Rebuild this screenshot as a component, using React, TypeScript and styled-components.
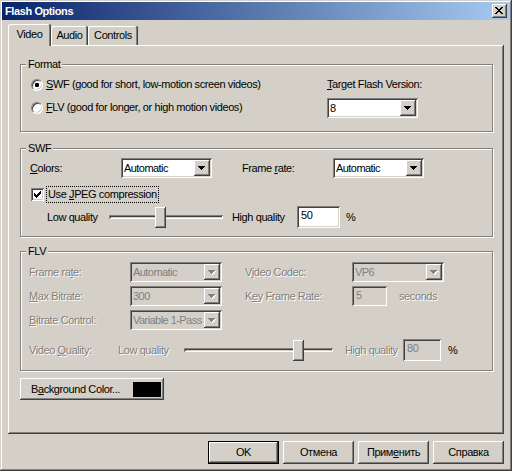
import React from "react";
import styled, { createGlobalStyle, css } from "styled-components";

const face = "#d4d0c8";
const shadow = "#808080";
const dark = "#404040";
const hi = "#ffffff";

const raised = css`
  box-shadow: inset -1px -1px ${dark}, inset 1px 1px ${hi}, inset -2px -2px ${shadow},
    inset 2px 2px ${face};
`;
const sunken = css`
  box-shadow: inset 1px 1px ${shadow}, inset -1px -1px ${hi}, inset 2px 2px ${dark},
    inset -2px -2px ${face};
`;

const GlobalStyle = createGlobalStyle`
  html, body { margin: 0; padding: 0; background: ${face}; }
  body { font-family: "Liberation Sans", Arial, sans-serif; font-size: 11px; }
  * { box-sizing: border-box; }
`;

const Window = styled.div`
  width: 512px;
  height: 471px;
  background: ${face};
  box-shadow: inset -1px -1px ${dark}, inset 1px 1px ${face}, inset -2px -2px ${shadow},
    inset 2px 2px ${hi};
  padding: 2px;
  display: flex;
  flex-direction: column;
  letter-spacing: -0.4px;
  color: #000;
  line-height: 13px;
`;

const TitleBar = styled.div`
  height: 18px;
  display: flex;
  align-items: center;
  justify-content: space-between;
  background: linear-gradient(to right, #0a246a, #a6caf0);
  padding: 0 3px 0 3px;
`;

const Title = styled.span`
  color: #fff;
  font-weight: bold;
  letter-spacing: -0.4px;
`;

const CloseButton = styled.div`
  width: 15px;
  height: 14px;
  background: ${face};
  ${raised};
  display: flex;
  align-items: center;
  justify-content: center;
  padding: 0 1px 1px 0;
`;

const Content = styled.div`
  flex: 1;
  padding: 4px 6px 0 6px;
  display: flex;
  flex-direction: column;
`;

const TabStrip = styled.div`
  display: flex;
  align-items: flex-end;
  height: 21px;
`;

const Tab = styled.div<{ $active?: boolean; $w: number }>`
  position: relative;
  z-index: ${(p) => (p.$active ? 1 : 0)};
  width: ${(p) => p.$w}px;
  height: ${(p) => (p.$active ? 22 : 19)}px;
  margin-bottom: ${(p) => (p.$active ? -1 : 0)}px;
  padding-bottom: ${(p) => (p.$active ? 2 : 0)}px;
  background: ${face};
  display: flex;
  align-items: center;
  justify-content: center;
  box-shadow: inset -1px 0 ${dark}, inset 1px 1px ${hi}, inset -2px 0 ${shadow};
  border-radius: 2px 2px 0 0;
`;

const Panel = styled.div`
  width: 496px;
  height: 389px;
  background: ${face};
  ${raised};
  padding: 19px 0 0 12px;
  display: flex;
  flex-direction: column;
`;

const Group = styled.div<{ $h: number; $mt?: number }>`
  position: relative;
  width: 473px;
  height: ${(p) => p.$h}px;
  margin-top: ${(p) => p.$mt ?? 0}px;
  border: 1px solid ${shadow};
  box-shadow: inset 1px 1px ${hi}, 1px 1px 0 ${hi};
  flex-shrink: 0;
`;

const GroupLabel = styled.span`
  position: absolute;
  top: -7px;
  left: 5px;
  padding: 0 2px;
  background: ${face};
`;

const Key = styled.span`
  text-decoration: underline;
`;

const FormatGrid = styled.div`
  display: grid;
  grid-template-columns: 296px auto;
  padding: 8px 10px 0 10px;
`;

const Column = styled.div`
  display: flex;
  flex-direction: column;
`;

const RadioRow = styled.div`
  display: flex;
  align-items: center;
  height: 23px;
`;

const Radio = styled.span<{ $checked?: boolean }>`
  width: 12px;
  height: 12px;
  border-radius: 50%;
  background: #fff;
  border: 1px solid;
  border-color: ${shadow} ${hi} ${hi} ${shadow};
  box-shadow: inset 1px 1px ${dark}, inset -1px -1px ${face};
  display: flex;
  align-items: center;
  justify-content: center;
  flex-shrink: 0;
  &::after {
    content: "";
    width: 4px;
    height: 4px;
    border-radius: 1px;
    background: ${(p) => (p.$checked ? "#000" : "transparent")};
  }
`;

const RadioText = styled.span`
  margin-left: 3px;
  white-space: nowrap;
`;

const Row = styled.div<{ $h: number; $mt?: number; $pl?: number }>`
  display: flex;
  align-items: center;
  height: ${(p) => p.$h}px;
  margin-top: ${(p) => p.$mt ?? 0}px;
  padding-left: ${(p) => p.$pl ?? 0}px;
`;

const Label = styled.span<{ $w?: number; $ml?: number; $disabled?: boolean }>`
  flex-shrink: 0;
  white-space: nowrap;
  width: ${(p) => (p.$w ? `${p.$w}px` : "auto")};
  margin-left: ${(p) => p.$ml ?? 0}px;
  color: ${(p) => (p.$disabled ? shadow : "#000")};
  text-shadow: ${(p) => (p.$disabled ? `1px 1px 0 ${hi}` : "none")};
`;

const GroupBody = styled.div<{ $pt: number; $pl: number }>`
  padding: ${(p) => p.$pt}px 0 0 ${(p) => p.$pl}px;
`;

const Combo = styled.div<{ $w: number; $disabled?: boolean }>`
  width: ${(p) => p.$w}px;
  height: 20px;
  flex-shrink: 0;
  ${sunken};
  background: ${(p) => (p.$disabled ? face : "#fff")};
  padding: 2px;
  display: flex;
  color: ${(p) => (p.$disabled ? shadow : "#000")};
`;

const ComboValue = styled.span`
  flex: 1;
  display: flex;
  align-items: center;
  padding-left: 1px;
  white-space: nowrap;
  overflow: hidden;
  letter-spacing: -0.55px;
`;

const ComboButton = styled.span`
  width: 16px;
  flex-shrink: 0;
  background: ${face};
  ${raised};
  display: flex;
  align-items: center;
  justify-content: center;
`;

const TextBox = styled.div<{ $w: number; $h: number; $disabled?: boolean }>`
  width: ${(p) => p.$w}px;
  height: ${(p) => p.$h}px;
  flex-shrink: 0;
  ${sunken};
  background: ${(p) => (p.$disabled ? face : "#fff")};
  color: ${(p) => (p.$disabled ? shadow : "#000")};
  padding: 3px 0 0 4px;
`;

const CheckBox = styled.span`
  width: 13px;
  height: 13px;
  margin-left: 1px;
  flex-shrink: 0;
  background: #fff;
  ${sunken};
  display: flex;
  align-items: center;
  justify-content: center;
`;

const FocusLabel = styled.span`
  margin-left: 2px;
  height: 17px;
  padding: 1px 1px 0 1px;
  border: 1px dotted #000;
  display: inline-block;
  white-space: nowrap;
`;

const Slider = styled.div<{ $w: number }>`
  position: relative;
  width: ${(p) => p.$w}px;
  height: 22px;
  flex-shrink: 0;
  display: flex;
  align-items: center;
`;

const Channel = styled.div`
  width: 100%;
  height: 4px;
  ${sunken};
`;

const Thumb = styled.div`
  position: absolute;
  top: 1px;
  width: 11px;
  height: 21px;
  background: ${face};
  ${raised};
`;

const ColorButton = styled.div`
  width: 144px;
  height: 22px;
  margin-top: 7px;
  ${raised};
  background: ${face};
  display: flex;
  align-items: center;
  justify-content: space-between;
  padding: 0 3px 0 11px;
  flex-shrink: 0;
`;

const Swatch = styled.span`
  width: 28px;
  height: 15px;
  background: #000;
`;

const ButtonBar = styled.div`
  display: flex;
  justify-content: flex-end;
  gap: 4px;
  margin-top: 7px;
`;

const DialogButton = styled.div<{ $default?: boolean }>`
  width: 71px;
  height: 23px;
  background: ${face};
  display: flex;
  align-items: center;
  justify-content: center;
  ${(p) =>
    p.$default
      ? css`
          box-shadow: inset 0 0 0 1px #000, inset -2px -2px ${dark}, inset 2px 2px ${hi},
            inset -3px -3px ${shadow}, inset 3px 3px ${face};
        `
      : raised};
`;

const Arrow = ({ disabled }: { disabled?: boolean }) => (
  <svg width="8" height="5" viewBox="0 0 8 5">
    {disabled && (
      <path d="M1 1h7v1H1z M2 2h5v1H2z M3 3h3v1H3z M4 4h1v1H4z" fill={hi} />
    )}
    <path
      d="M0 0h7v1H0z M1 1h5v1H1z M2 2h3v1H2z M3 3h1v1H3z"
      fill={disabled ? shadow : "#000"}
    />
  </svg>
);

const ComboBox = ({ w, value, disabled }: { w: number; value: string; disabled?: boolean }) => (
  <Combo $w={w} $disabled={disabled}>
    <ComboValue>{value}</ComboValue>
    <ComboButton>
      <Arrow disabled={disabled} />
    </ComboButton>
  </Combo>
);

const TrackBar = ({ w, pos }: { w: number; pos: number }) => (
  <Slider $w={w}>
    <Channel />
    <Thumb style={{ left: pos }} />
  </Slider>
);

export default function App() {
  return (
    <>
      <GlobalStyle />
      <Window>
        <TitleBar>
          <Title>Flash Options</Title>
          <CloseButton>
            <svg width="8" height="7" viewBox="0 0 8 7">
              <path
                d="M0 0h2v1H0z M6 0h2v1H6z M1 1h2v1H1z M5 1h2v1H5z M2 2h4v1H2z M3 3h2v1H3z M2 4h4v1H2z M1 5h2v1H1z M5 5h2v1H5z M0 6h2v1H0z M6 6h2v1H6z"
                fill="#000"
              />
            </svg>
          </CloseButton>
        </TitleBar>
        <Content>
          <TabStrip>
            <Tab $active $w={43}>
              Video
            </Tab>
            <Tab $w={37}>Audio</Tab>
            <Tab $w={50}>Controls</Tab>
          </TabStrip>
          <Panel>
            <Group $h={68}>
              <GroupLabel>Format</GroupLabel>
              <FormatGrid>
                <Column>
                  <RadioRow>
                    <Radio $checked />
                    <RadioText>
                      <Key>S</Key>WF (good for short, low-motion screen videos)
                    </RadioText>
                  </RadioRow>
                  <RadioRow>
                    <Radio />
                    <RadioText>
                      <Key>F</Key>LV (good for longer, or high motion videos)
                    </RadioText>
                  </RadioRow>
                </Column>
                <Column>
                  <Row $h={23}>
                    <Label>
                      <Key>T</Key>arget Flash Version:
                    </Label>
                  </Row>
                  <Row $h={20} $mt={2}>
                    <ComboBox w={91} value="8" />
                  </Row>
                </Column>
              </FormatGrid>
            </Group>

            <Group $h={89} $mt={16}>
              <GroupLabel>SWF</GroupLabel>
              <GroupBody $pt={9} $pl={9}>
                <Row $h={20}>
                  <Label $w={91}>
                    <Key>C</Key>olors:
                  </Label>
                  <ComboBox w={91} value="Automatic" />
                  <Label $w={91} $ml={30}>
                    Frame <Key>r</Key>ate:
                  </Label>
                  <ComboBox w={91} value="Automatic" />
                </Row>
                <Row $h={17} $mt={8}>
                  <CheckBox>
                    <svg width="7" height="7" viewBox="0 0 7 7">
                      <path
                        d="M6 0h1v1H6z M5 1h2v1H5z M0 2h1v1H0z M4 2h3v1H4z M0 3h2v1H0z M3 3h3v1H3z M0 4h5v1H0z M1 5h3v1H1z M2 6h1v1H2z"
                        fill="#000"
                      />
                    </svg>
                  </CheckBox>
                  <FocusLabel>
                    Use <Key>J</Key>PEG compression
                  </FocusLabel>
                </Row>
                <Row $h={22} $mt={3} $pl={17}>
                  <Label $w={62}>Low quality</Label>
                  <TrackBar w={114} pos={46} />
                  <Label $w={65} $ml={9}>
                    High quality
                  </Label>
                  <TextBox $w={43} $h={22}>
                    50
                  </TextBox>
                  <Label $ml={6}>%</Label>
                </Row>
              </GroupBody>
            </Group>

            <Group $h={120} $mt={14}>
              <GroupLabel>FLV</GroupLabel>
              <GroupBody $pt={10} $pl={8}>
                <Row $h={20}>
                  <Label $w={101} $disabled>
                    Frame ra<Key>t</Key>e:
                  </Label>
                  <ComboBox w={92} value="Automatic" disabled />
                  <Label $w={107} $ml={23} $disabled>
                    V<Key>i</Key>deo Codec:
                  </Label>
                  <ComboBox w={92} value="VP6" disabled />
                </Row>
                <Row $h={20} $mt={4}>
                  <Label $w={101} $disabled>
                    <Key>M</Key>ax Bitrate:
                  </Label>
                  <ComboBox w={92} value="300" disabled />
                  <Label $w={107} $ml={23} $disabled>
                    K<Key>e</Key>y Frame Rate:
                  </Label>
                  <TextBox $w={35} $h={20} $disabled>
                    5
                  </TextBox>
                  <Label $ml={12} $disabled>
                    seconds
                  </Label>
                </Row>
                <Row $h={20} $mt={4}>
                  <Label $w={101} $disabled>
                    <Key>B</Key>itrate Control:
                  </Label>
                  <ComboBox w={92} value="Variable 1-Pass" disabled />
                </Row>
                <Row $h={22} $mt={9}>
                  <Label $w={89} $disabled>
                    Video <Key>Q</Key>uality:
                  </Label>
                  <Label $w={66} $disabled>
                    Low quality
                  </Label>
                  <TrackBar w={149} pos={109} />
                  <Label $w={58} $ml={12} $disabled>
                    High quality
                  </Label>
                  <TextBox $w={38} $h={22} $disabled>
                    80
                  </TextBox>
                  <Label $ml={7}>%</Label>
                </Row>
              </GroupBody>
            </Group>

            <ColorButton>
              <span>
                B<Key>a</Key>ckground Color...
              </span>
              <Swatch />
            </ColorButton>
          </Panel>
          <ButtonBar>
            <DialogButton $default>OK</DialogButton>
            <DialogButton>Отмена</DialogButton>
            <DialogButton>
              Прим<Key>е</Key>нить
            </DialogButton>
            <DialogButton>Справка</DialogButton>
          </ButtonBar>
        </Content>
      </Window>
    </>
  );
}
